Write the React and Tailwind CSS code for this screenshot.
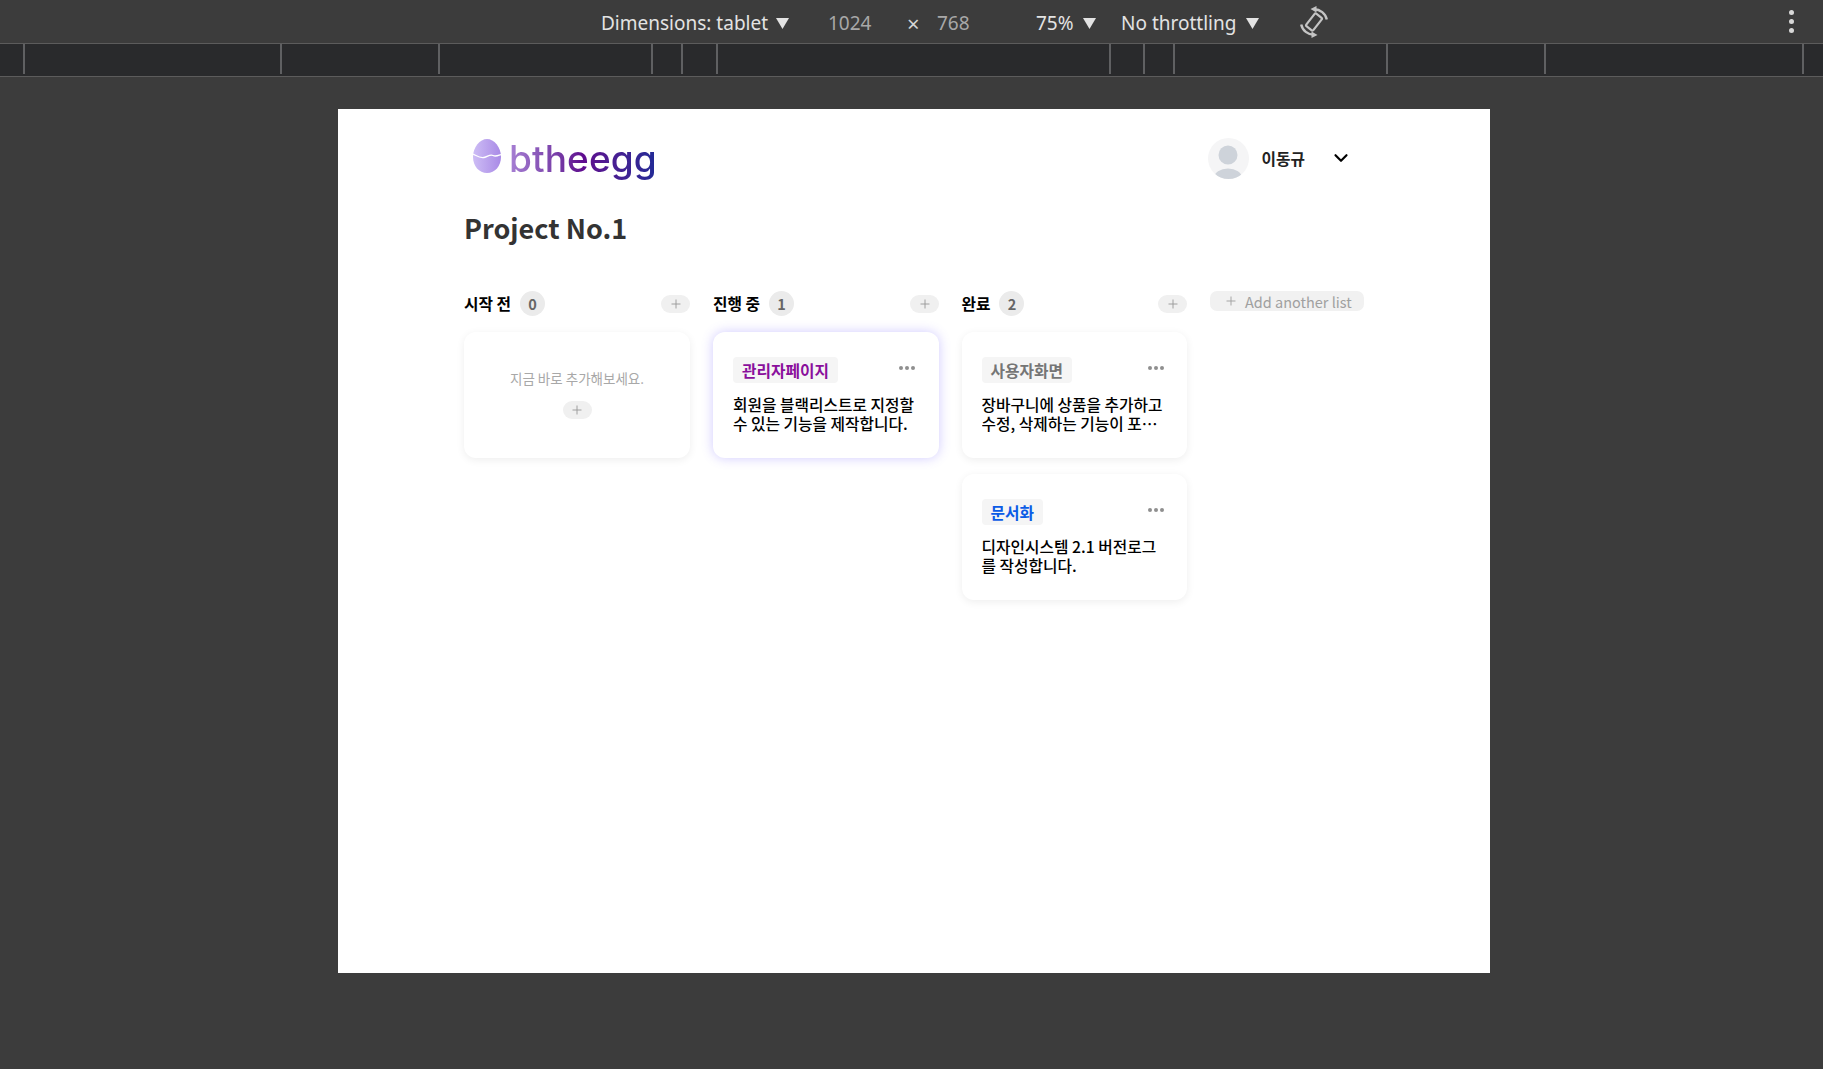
import React from 'react';
import { Plus, ChevronDown } from 'lucide-react';

const KR = "font-['Noto_Sans_CJK_KR','Noto_Sans',sans-serif]";

const Caret = () => (
  <svg width="13" height="11" viewBox="0 0 13 11" className="mt-[3px] shrink-0">
    <path d="M0 0h13L6.5 11z" fill="#e3e3e3" />
  </svg>
);

const RotateIcon = () => (
  <svg width="32" height="32" viewBox="-16 -16 32 32" fill="none" stroke="#c4c4c4" strokeWidth="2.4">
    <rect x="-4.5" y="-8" width="9" height="16" rx="1.5" transform="rotate(38)" strokeWidth="2.2" />
    <path d="M0 -12.8 A13 13 0 0 1 12.8 -2.5" />
    <path d="M-12.8 2.5 A13 13 0 0 0 0 12.8" />
    <path d="M-3.5 -13 L2.5 -16 L2.5 -9.5 Z" fill="#c4c4c4" stroke="none" />
    <path d="M3.5 13 L-2.5 16 L-2.5 9.5 Z" fill="#c4c4c4" stroke="none" />
  </svg>
);

const Toolbar = () => (
  <div className="flex h-[44px] items-center border-b border-[#5c5c5c] pl-[601px] text-[19px] text-[#e3e3e3] font-['Noto_Sans',sans-serif]">
    <span className="w-[175px] whitespace-nowrap pt-[3px]">Dimensions: tablet</span>
    <Caret />
    <span className="ml-[39px] w-[79px] pt-[3px] text-[#a8a8a8]">1024</span>
    <span className="w-[30px] pt-[3px] text-[22px] text-[#d5d5d5]">×</span>
    <span className="w-[99px] pt-[3px] text-[#a8a8a8]">768</span>
    <span className="w-[47px] pt-[3px]">75%</span>
    <Caret />
    <span className="ml-[25px] w-[125px] whitespace-nowrap pt-[3px]">No throttling</span>
    <Caret />
    <span className="ml-[39px]">
      <RotateIcon />
    </span>
    <span className="ml-[459px] flex flex-col gap-[4px]">
      <span className="size-[5px] rounded-full bg-[#d8d8d8]" />
      <span className="size-[5px] rounded-full bg-[#d8d8d8]" />
      <span className="size-[5px] rounded-full bg-[#d8d8d8]" />
    </span>
  </div>
);

const Ruler = () => (
  <div className="flex h-[33px] items-start border-b border-[#5c5c5c] bg-[#292a2c]">
    <div className="h-[30px] w-[25px] border-r-2 border-[#5f6062]" />
    <div className="h-[30px] w-[257px] border-r-2 border-[#5f6062]" />
    <div className="h-[30px] w-[158px] border-r-2 border-[#5f6062]" />
    <div className="h-[30px] w-[213px] border-r-2 border-[#5f6062]" />
    <div className="h-[30px] w-[30px] border-r-2 border-[#5f6062]" />
    <div className="h-[30px] w-[35px] border-r-2 border-[#5f6062]" />
    <div className="h-[30px] w-[393px] border-r-2 border-[#5f6062]" />
    <div className="h-[30px] w-[34px] border-r-2 border-[#5f6062]" />
    <div className="h-[30px] w-[30px] border-r-2 border-[#5f6062]" />
    <div className="h-[30px] w-[213px] border-r-2 border-[#5f6062]" />
    <div className="h-[30px] w-[158px] border-r-2 border-[#5f6062]" />
    <div className="h-[30px] w-[258px] border-r-2 border-[#5f6062]" />
  </div>
);

const Logo = () => (
  <div className="flex items-center">
    <svg width="28" height="34" viewBox="0 0 28 34" className="mb-[4px] shrink-0">
      <defs>
        <linearGradient id="egg" x1="0" y1="0" x2="1" y2="0">
          <stop offset="0" stopColor="#cdbdf5" />
          <stop offset="1" stopColor="#a98ae6" />
        </linearGradient>
      </defs>
      <path d="M14 0C21 0 28 8 28 18C28 27 22 34 14 34C6 34 0 27 0 18C0 8 7 0 14 0Z" fill="url(#egg)" />
      <path d="M0 15C4 17 7 19.500 11 18.500C15 17.500 17 15 20 16.500C23 18 25 16.500 28 15.500" fill="none" stroke="#fff" strokeWidth="1.3" />
    </svg>
    <span className="ml-[8px] bg-gradient-to-r from-[#a780d4] via-[#5f0a8f] to-[#1f2a96] bg-clip-text pt-[7px] pb-[5px] font-['Inter',sans-serif] text-[37px] leading-[40px] font-medium tracking-[0.1px] text-transparent">
      btheegg
    </span>
  </div>
);

const Avatar = () => (
  <svg width="41" height="41" viewBox="0 0 41 41" className="shrink-0">
    <clipPath id="av">
      <circle cx="20.5" cy="20.5" r="20.5" />
    </clipPath>
    <circle cx="20.5" cy="20.5" r="20.5" fill="#f5f5f6" />
    <circle cx="20" cy="17" r="9.5" fill="#ced3da" />
    <ellipse cx="20" cy="40" rx="14" ry="9.5" fill="#ced3da" clipPath="url(#av)" />
  </svg>
);

const PlusPill = () => (
  <button className="flex h-[18px] w-[29px] items-center justify-center rounded-full bg-[#f0f0f0] text-[#999]">
    <Plus size={14} strokeWidth={1.6} />
  </button>
);

const ColumnHeader = ({ title, count }) => (
  <div className="flex h-[25px] items-center justify-between">
    <div className="flex items-center gap-[9px]">
      <span className="text-[15.75px] font-bold text-black">{title}</span>
      <span className="flex size-[25px] items-center justify-center rounded-full bg-[#ebebeb] text-[14.5px] font-bold text-[#666]">
        {count}
      </span>
    </div>
    <PlusPill />
  </div>
);

const Dots = () => (
  <div className="flex gap-[2px] pt-[9px]">
    <span className="size-[4px] rounded-full bg-[#8f8f8f]" />
    <span className="size-[4px] rounded-full bg-[#8f8f8f]" />
    <span className="size-[4px] rounded-full bg-[#8f8f8f]" />
  </div>
);

const Card = ({ tag, tagColor, text, active, clamp, tight }) => (
  <div
    className={`h-[126px] rounded-[12px] bg-white pt-[25px] pr-[20px] pl-[20px] ${
      active ? 'shadow-[0_0_12px_rgba(110,90,255,0.32)]' : 'shadow-[0_2px_9px_rgba(0,0,0,0.07)]'
    }`}
  >
    <div className={`flex items-start justify-between ${tight ? 'pr-[3px]' : 'pr-[4px]'}`}>
      <span className={`flex h-[26px] items-center rounded-[4px] bg-[#f5f5f5] px-[9px] pt-[1px] text-[15.75px] font-bold ${tagColor}`}>
        {tag}
      </span>
      <Dots />
    </div>
    <p className={`mt-[12px] text-[15.75px] leading-[19px] font-medium text-black ${clamp ? 'line-clamp-2' : ''}`}>{text}</p>
  </div>
);

const EmptyCard = () => (
  <div className="flex h-[126px] flex-col items-center rounded-[12px] bg-white pt-[36px] shadow-[0_2px_9px_rgba(0,0,0,0.07)]">
    <p className="text-[13.5px] leading-[20px] text-[#a8a8a8]">지금 바로 추가해보세요.</p>
    <div className="mt-[13px]">
      <PlusPill />
    </div>
  </div>
);

export default function App() {
  return (
    <div className={`h-[1069px] overflow-hidden bg-[#3c3c3c] ${KR}`}>
      <Toolbar />
      <Ruler />
      <div className="pt-[32px] pl-[338px]">
        <div className="h-[864px] w-[1152px] bg-white pt-[27px] pl-[126px]">
          <div className="flex h-[44px] items-center justify-between pl-[9px]">
            <Logo />
            <div className="mr-[138px] flex items-center">
              <Avatar />
              <span className="ml-[13px] pt-[1px] text-[15.75px] font-bold text-[#222]">이동규</span>
              <ChevronDown size={22} strokeWidth={2.4} className="ml-[25px] text-black" />
            </div>
          </div>
          <h1 className="mt-[30px] text-[27px] leading-[36px] font-bold text-[#333]">Project No.1</h1>

          <div className="mt-[45px] flex items-start gap-[23px]">
            <div className="w-[226px]">
              <ColumnHeader title="시작 전" count="0" />
              <div className="mt-[16px]">
                <EmptyCard />
              </div>
            </div>
            <div className="mr-[-0.5px] w-[226px]">
              <ColumnHeader title="진행 중" count="1" />
              <div className="mt-[16px]">
                <Card
                  active
                  tag="관리자페이지"
                  tagColor="text-[#8a0f9c]"
                  text="회원을 블랙리스트로 지정할 수 있는 기능을 제작합니다."
                />
              </div>
            </div>
            <div className="w-[225.5px]">
              <ColumnHeader title="완료" count="2" />
              <div className="mt-[16px] flex flex-col gap-[16px]">
                <Card
                  clamp
                  tight
                  tag="사용자화면"
                  tagColor="text-[#757575]"
                  text="장바구니에 상품을 추가하고 수정, 삭제하는 기능이 포함된 페이지를 제작합니다."
                />
                <Card
                  tight
                  tag="문서화"
                  tagColor="text-[#0b5ce6]"
                  text="디자인시스템 2.1 버전로그를 작성합니다."
                />
              </div>
            </div>
            <button className="flex h-[20px] w-[154px] items-center rounded-[7px] bg-[#f1f1f1] pl-[14px] text-[14.5px] text-[#a0a0a0]">
              <Plus size={14} strokeWidth={1.6} />
              <span className="ml-[7px] whitespace-nowrap pt-[1px]">Add another list</span>
            </button>
          </div>
        </div>
      </div>
    </div>
  );
}
